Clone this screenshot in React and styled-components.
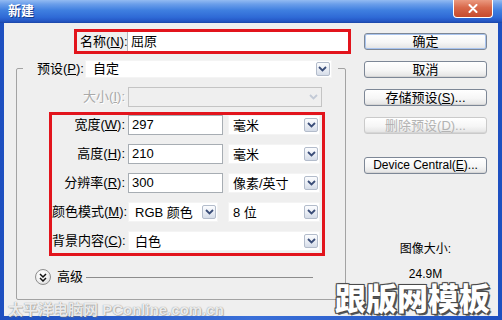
import React from "react";
import styled, { createGlobalStyle } from "styled-components";

const FONT = `"Liberation Sans", "Noto Sans CJK SC", sans-serif`;

const GlobalStyle = createGlobalStyle`
  html, body { margin: 0; padding: 0; background: #ffffff; }
  body { font-family: ${FONT}; }
  * { box-sizing: border-box; }
`;

const Window = styled.div`
  position: relative;
  width: 502px;
  height: 320px;
  display: flex;
  flex-direction: column;
  background: linear-gradient(90deg, #1d4fc0, #3a6fd8 50%, #1d4fc0);
  overflow: hidden;
  font-family: ${FONT};
  color: #000;
`;

const TitleBar = styled.div`
  flex: none;
  height: 23px;
  display: flex;
  align-items: flex-start;
  justify-content: space-between;
  background: linear-gradient(#93bbf2 0%, #6a9eea 18%, #3f7fe0 45%, #2f6ad6 75%, #2456c4 92%, #1a45a6 100%);
`;

const Title = styled.div`
  padding-left: 8px;
  line-height: 22px;
  font-size: 13px;
  font-weight: bold;
  color: #ffffff;
  text-shadow: 1px 1px 0 #143a8c;
`;

const CloseButton = styled.div`
  width: 40px;
  height: 18px;
  margin-right: 9px;
  display: flex;
  align-items: center;
  justify-content: center;
  border: 1px solid #ffffff;
  border-top: none;
  border-radius: 0 0 4px 4px;
  background: linear-gradient(#eb9a80, #d8684a 45%, #c64a2c);
`;

const Body = styled.div`
  flex: 1;
  margin: 0 4px 4px 4px;
  display: flex;
  background: #efefef;
`;

const LeftCol = styled.div`
  width: 347px;
  padding-top: 6px;
  display: flex;
  flex-direction: column;
`;

const NameBox = styled.div`
  margin-left: 70px;
  width: 277px;
  height: 25px;
  display: flex;
  border: 3px solid #e2141c;
`;

const NameLabel = styled.div`
  width: 50px;
  padding-left: 3px;
  font-size: 13px;
  line-height: 19px;
  white-space: nowrap;
`;

const NameInput = styled.div`
  flex: 1;
  padding-left: 3px;
  background: #ffffff;
  border-left: 1px solid #b4b8bc;
  font-size: 13px;
  line-height: 19px;
`;

const GroupBox = styled.fieldset`
  margin: 6px 0 0 12px;
  width: 330px;
  min-inline-size: 0;
  padding: 0 0 13px 6px;
  border: 1px solid #a3a3a3;
  border-radius: 2px;
`;

const Legend = styled.legend`
  height: 17px;
  padding: 0 6px 0 2px;
  display: flex;
  align-items: center;
`;

const LegendLabel = styled.span`
  margin-left: 12px;
  margin-right: 1px;
  font-size: 13px;
  line-height: 17px;
  white-space: nowrap;
`;

const Row = styled.div`
  height: 20px;
  display: flex;
  align-items: center;
`;

const SizeRow = styled(Row)`
  margin: 10px 0 0 29px;
  width: 270px;
`;

const FieldLabel = styled.div`
  width: 73px;
  margin-right: 3px;
  flex: none;
  text-align: right;
  font-size: 13px;
  line-height: 16px;
  white-space: nowrap;
  color: ${(p) => (p.$disabled ? "#a9a9a9" : "#000")};
  text-shadow: ${(p) => (p.$disabled ? "1px 1px 0 #ffffff" : "none")};
`;

const Highlight = styled.div`
  margin: 5px 0 0 26px;
  width: 276px;
  padding: 0 2px 2px 0;
  display: flex;
  flex-direction: column;
  gap: 9px;
  border: 3px solid #e2141c;
`;

const TextInput = styled.div`
  flex: none;
  width: ${(p) => p.$w}px;
  height: 20px;
  padding-left: 3px;
  background: #ffffff;
  border: 1px solid #a7adb3;
  font-size: 13px;
  line-height: 18px;
`;

const SelectBox = styled.div`
  flex: none;
  width: ${(p) => p.$w}px;
  height: ${(p) => p.$h}px;
  margin-left: ${(p) => p.$ml || 0}px;
  padding: ${(p) => (p.$h < 20 ? "1px" : "2px")} 1px ${(p) => (p.$h < 20 ? "1px" : "2px")} 0;
  display: flex;
  align-items: stretch;
  background: ${(p) => (p.$disabled ? "#efefef" : "#ffffff")};
  border: 1px solid ${(p) => (p.$disabled ? "#c4c4c4" : "#f4f4f4")};
`;

const SelectText = styled.span`
  flex: 1;
  display: flex;
  align-items: center;
  padding-left: ${(p) => p.$pad}px;
  font-size: 13px;
  line-height: 1;
  white-space: nowrap;
`;

const DropButton = styled.span`
  flex: none;
  width: 14px;
  display: flex;
  align-items: center;
  justify-content: center;
  border: 1px solid ${(p) => (p.$disabled ? "transparent" : "#b3bccb")};
  border-radius: 2px;
  background: ${(p) => (p.$disabled ? "transparent" : "linear-gradient(#fbfcfe, #e9edf4 55%, #d5dce8)")};
`;

const AdvancedRow = styled.div`
  margin: 12px 32px 0 12px;
  height: 18px;
  display: flex;
  align-items: center;
`;

const RoundButton = styled.div`
  width: 16px;
  height: 16px;
  flex: none;
  display: flex;
  align-items: center;
  justify-content: center;
  border: 1px solid #8e8e8e;
  border-radius: 50%;
  background: radial-gradient(circle at 40% 35%, #ffffff, #f1f1f1 50%, #cfcfcf);
`;

const AdvancedText = styled.span`
  margin-left: 6px;
  font-size: 13px;
  line-height: 16px;
`;

const Rule = styled.div`
  flex: 1;
  margin-left: 3px;
  height: 1px;
  background: #8c8c8c;
`;

const RightCol = styled.div`
  width: 123px;
  margin-left: 13px;
  padding-top: 10px;
  display: flex;
  flex-direction: column;
`;

const Button = styled.div`
  height: 17px;
  margin-top: ${(p) => p.$mt || 0}px;
  border: 1px solid ${(p) => (p.$disabled ? "#cacaca" : "#7d8796")};
  border-radius: 3px;
  background: linear-gradient(#ffffff, #f6f6f6 55%, #e3e3e3);
  box-shadow: ${(p) => (p.$default ? "inset 0 0 0 1px #a9c4ee" : "inset 0 -1px 0 #d6d6d6")};
  color: ${(p) => (p.$disabled ? "#b3b3b3" : "#000")};
  font-size: ${(p) => p.$fs || 13}px;
  line-height: 15px;
  text-align: center;
  white-space: nowrap;
`;

const SizeCaption = styled.div`
  margin-top: ${(p) => p.$mt}px;
  font-size: 12px;
  line-height: 16px;
  text-align: center;
`;

const SiteMark = styled.div`
  position: absolute;
  left: 8px;
  top: 301px;
  font-size: 15px;
  font-weight: bold;
  line-height: 17px;
  white-space: nowrap;
  color: rgba(255, 255, 255, 0.85);
  text-shadow: 0 0 1px rgba(90, 90, 90, 0.8), 1px 1px 0 rgba(120, 120, 120, 0.35);
`;

const BrandMark = styled.div`
  position: absolute;
  left: 335px;
  top: 283px;
  font-size: 31px;
  font-weight: 900;
  line-height: 34px;
  letter-spacing: 0;
  white-space: nowrap;
  color: #ffffff;
  text-shadow: -1px -1px 0 #4a4a4a, 1px -1px 0 #4a4a4a, -1px 1px 0 #4a4a4a, 1px 1px 0 #4a4a4a,
    2px 2px 0 #5a5a5a, 0 0 2px #333;
`;

function Chevron({ color }) {
  return (
    <svg width="9" height="6" viewBox="0 0 9 6">
      <polyline points="1,1 4.5,4.5 8,1" fill="none" stroke={color} strokeWidth="1.8" />
    </svg>
  );
}

function Select({ value, w, h = 20, ml, pad = 5, disabled }) {
  return (
    <SelectBox $w={w} $h={h} $ml={ml} $disabled={disabled}>
      <SelectText $pad={pad}>{value}</SelectText>
      <DropButton $disabled={disabled}>
        <Chevron color={disabled ? "#c3cad6" : "#3a4d78"} />
      </DropButton>
    </SelectBox>
  );
}

function Field({ label, m, children }) {
  return (
    <Row>
      <FieldLabel>
        {label}(<u>{m}</u>):
      </FieldLabel>
      {children}
    </Row>
  );
}

export default function App() {
  return (
    <>
      <GlobalStyle />
      <Window>
        <TitleBar>
          <Title>新建</Title>
          <CloseButton>
            <svg width="10" height="9" viewBox="0 0 10 9">
              <path d="M1.5 1 L8.5 8 M8.5 1 L1.5 8" stroke="#ffffff" strokeWidth="2" strokeLinecap="round" />
            </svg>
          </CloseButton>
        </TitleBar>
        <Body>
          <LeftCol>
            <NameBox>
              <NameLabel>
                名称(<u>N</u>):
              </NameLabel>
              <NameInput>屈原</NameInput>
            </NameBox>
            <GroupBox>
              <Legend>
                <LegendLabel>
                  预设(<u>P</u>):
                </LegendLabel>
                <Select value="自定" w={247} h={18} pad={7} />
              </Legend>
              <SizeRow>
                <FieldLabel $disabled>
                  大小(<u>I</u>):
                </FieldLabel>
                <Select value="" w={194} disabled />
              </SizeRow>
              <Highlight>
                <Field label="宽度" m="W">
                  <TextInput $w={95}>297</TextInput>
                  <Select value="毫米" w={92} ml={5} pad={4} />
                </Field>
                <Field label="高度" m="H">
                  <TextInput $w={95}>210</TextInput>
                  <Select value="毫米" w={92} ml={5} pad={4} />
                </Field>
                <Field label="分辨率" m="R">
                  <TextInput $w={95}>300</TextInput>
                  <Select value="像素/英寸" w={92} ml={5} pad={4} />
                </Field>
                <Field label="颜色模式" m="M">
                  <Select value="RGB 颜色" w={90} pad={6} />
                  <Select value="8 位" w={92} ml={10} pad={4} />
                </Field>
                <Field label="背景内容" m="C">
                  <Select value="白色" w={192} pad={6} />
                </Field>
              </Highlight>
              <AdvancedRow>
                <RoundButton>
                  <svg width="8" height="9" viewBox="0 0 8 9">
                    <polyline points="1,1 4,4 7,1" fill="none" stroke="#111" strokeWidth="1.5" />
                    <polyline points="1,5 4,8 7,5" fill="none" stroke="#111" strokeWidth="1.5" />
                  </svg>
                </RoundButton>
                <AdvancedText>高级</AdvancedText>
                <Rule />
              </AdvancedRow>
            </GroupBox>
          </LeftCol>
          <RightCol>
            <Button $default>确定</Button>
            <Button $mt={11}>取消</Button>
            <Button $mt={11}>
              存储预设(<u>S</u>)...
            </Button>
            <Button $mt={11} $disabled>
              删除预设(<u>D</u>)...
            </Button>
            <Button $mt={23} $fs={12}>
              Device Central(<u>E</u>)...
            </Button>
            <SizeCaption $mt={67}>图像大小:</SizeCaption>
            <SizeCaption $mt={9}>24.9M</SizeCaption>
          </RightCol>
        </Body>
        <SiteMark>太平洋电脑网 PConline.com.cn</SiteMark>
        <BrandMark>跟版网模板</BrandMark>
      </Window>
    </>
  );
}
